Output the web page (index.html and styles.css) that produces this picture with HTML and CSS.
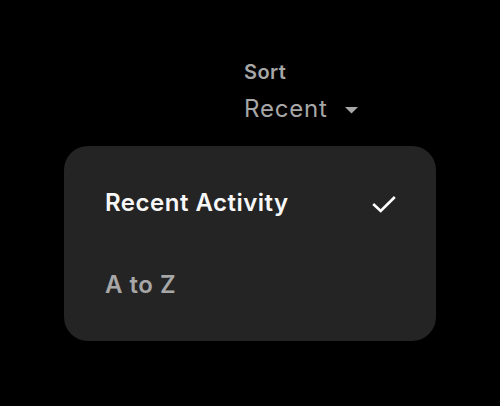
FILE: index.html
```html
<!DOCTYPE html>
<html>
<head>
<meta charset="utf-8">
<link rel="stylesheet" href="styles.css">
</head>
<body>
<div class="page">
  <div class="sort">
    <div class="sort-label">Sort</div>
    <div class="sort-value">
      <span>Recent</span>
      <svg class="caret" width="13" height="7" viewBox="0 0 13 7"><path d="M0 0 H13 L6.5 6.5 Z" fill="#a7a7a7"/></svg>
    </div>
  </div>
  <div class="menu">
    <div class="item selected">
      <span>Recent Activity</span>
      <svg class="check" width="24" height="18" viewBox="0 0 24 18"><path d="M1.2 8 L8.7 15 L22.8 1" fill="none" stroke="#ffffff" stroke-width="2.6" stroke-linecap="butt" stroke-linejoin="miter"/></svg>
    </div>
    <div class="item">
      <span>A to Z</span>
    </div>
  </div>
</div>
</body>
</html>
```
FILE: styles.css
```css
html, body {
  margin: 0;
  padding: 0;
  background: #000;
}
body {
  font-family: "Inter", "Noto Sans", sans-serif;
  width: 500px;
  height: 406px;
  overflow: hidden;
}
.page {
  padding-top: 59px;
}
.sort {
  margin-left: 244px;
  color: #a7a7a7;
}
.sort-label {
  font-size: 20px;
  font-weight: 600;
  line-height: 26px;
  letter-spacing: 0.4px;
}
.sort-value {
  display: flex;
  align-items: center;
  gap: 17px;
  font-size: 24px;
  font-weight: 400;
  line-height: 34px;
  letter-spacing: 0.8px;
  margin-top: 7px;
}
.caret {
  display: block;
  margin-top: 2px;
}
.menu {
  margin: 20px 64px 0;
  background: #242424;
  border-radius: 24px;
  padding: 15px 41px 16px;
}
.item {
  height: 82px;
  display: flex;
  align-items: center;
  justify-content: space-between;
  font-size: 24px;
  font-weight: 600;
  letter-spacing: 0.5px;
  color: #a7a7a7;
}
.item.selected {
  color: #f7f7f7;
}
.check {
  display: block;
  margin-top: 5px;
  margin-right: -1px;
}
```
